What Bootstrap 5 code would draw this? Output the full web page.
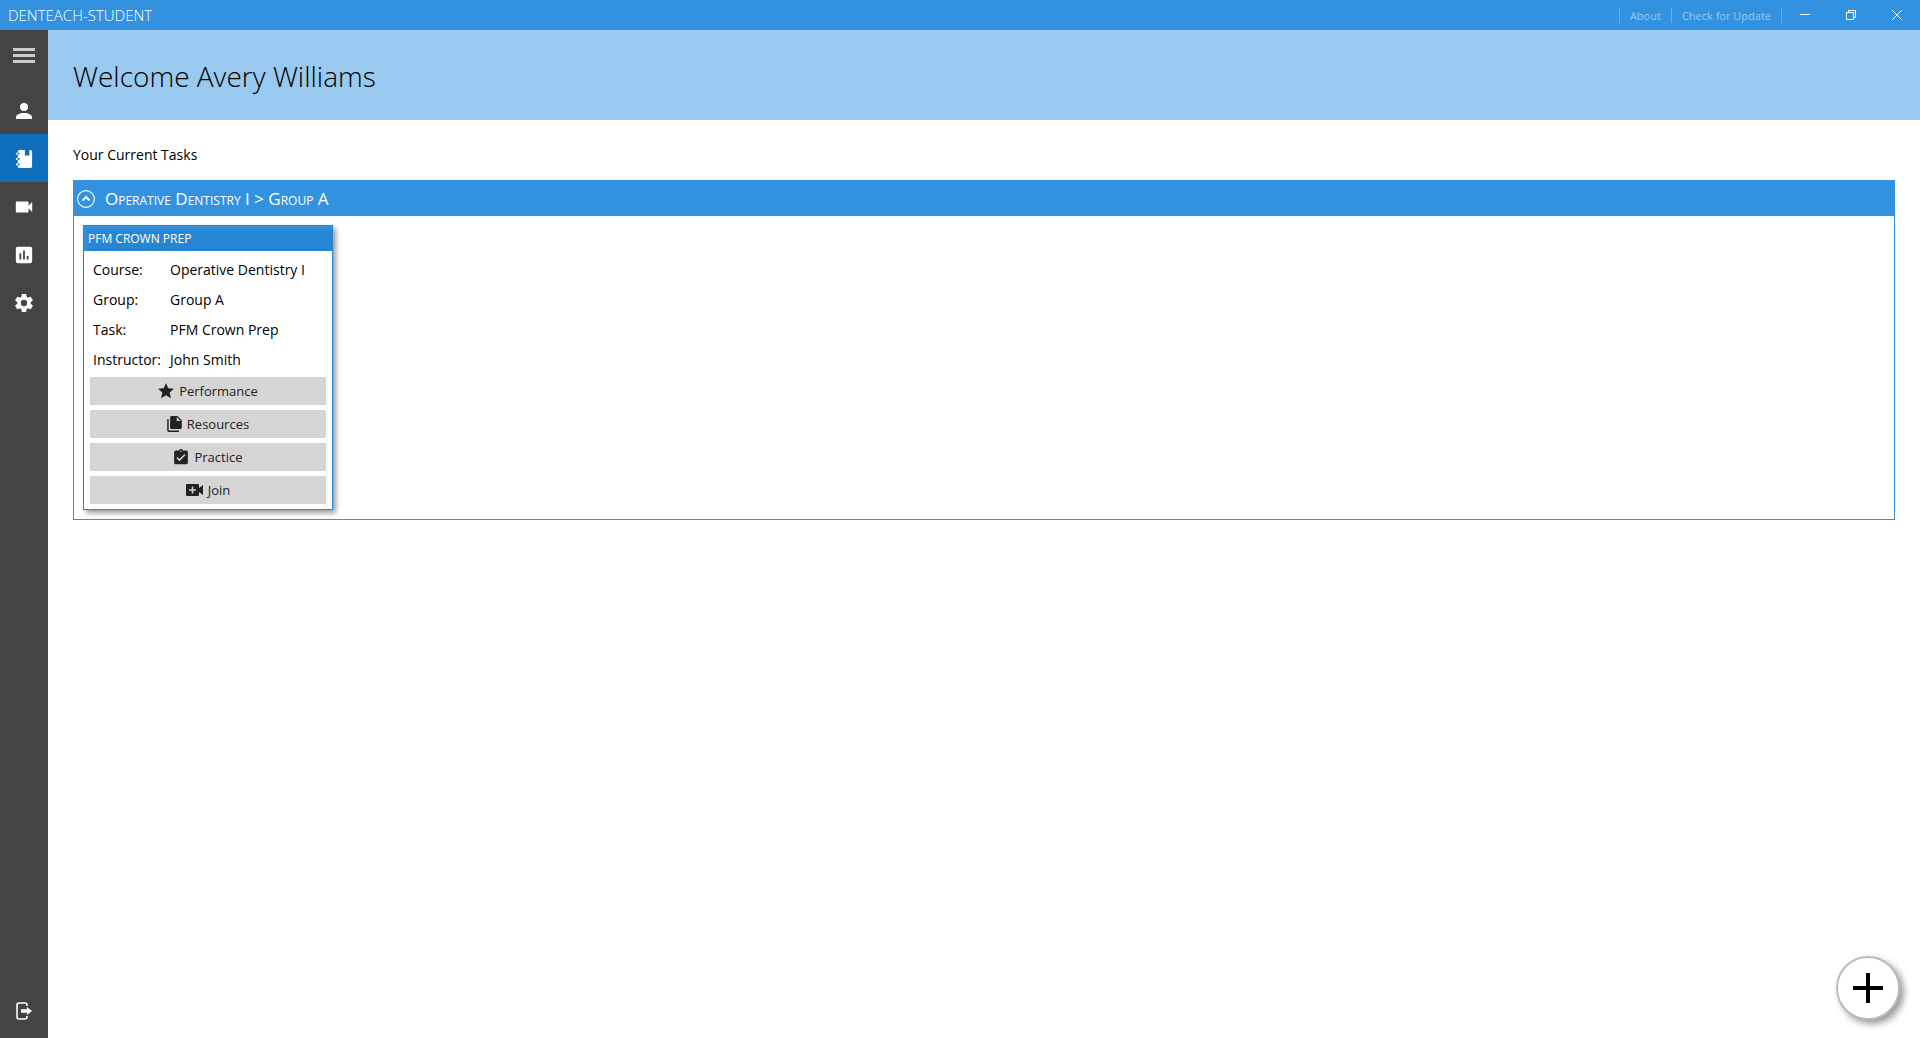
<!DOCTYPE html>
<html lang="en">
<head>
<meta charset="utf-8">
<meta name="viewport" content="width=device-width, initial-scale=1">
<title>DENTEACH-STUDENT</title>
<link href="https://cdn.jsdelivr.net/npm/bootstrap@5.3.0/dist/css/bootstrap.min.css" rel="stylesheet">
<style>
  body { font-family: "Open Sans", "Noto Sans", sans-serif; font-size: 14px; line-height: 20px; color: #000; }
  svg { display: block; fill: currentColor; flex: none; }
  .titlebar { height: 30px; background: #3392df; }
  .app-name { font-size: 15px; font-weight: 300; }
  .top-link { font-size: 11px; line-height: 15px; color: #94c8f2; border-left: 1px solid #66aee8; padding: 0 10px; }
  .top-link:last-of-type { border-right: 1px solid #66aee8; }
  .win-btn { width: 46px; height: 30px; }
  .side-rail { width: 48px; background: #444; }
  .rail-btn, .rail-btn.active { width: 48px; height: 48px; color: #fff; }
  .rail-btn.active { background: #0f6ebb; }
  .rail-btn svg { margin-top: 2px; }
  .menu-btn { margin-bottom: 8px; color: #ccc; }
  .welcome { height: 90px; background: #99c9ef; padding: 2px 25px 0; }
  .welcome h1 { font-size: 28px; line-height: 40px; font-weight: 300; }
  .content { padding: 25px; }
  .section-title { font-size: 14px; line-height: 20px; margin-bottom: 15px; }
  .task-group { border: 1px solid #3392df; }
  .group-head { height: 35px; background: #3392df; padding-left: 3px; gap: 10px; }
  .group-name { font-size: 17px; font-variant: small-caps; }
  .group-body { padding: 9px; }
  .task-card { width: 250px; border: 1px solid #2786d3; background: #fff; box-shadow: 3px 3px 5px rgba(0,0,0,.4); }
  .task-head { font-size: 12px; line-height: 25px; background: #2786d3; box-shadow: inset 3px 3px 5px #3392df; padding-left: 4px; }
  .task-info { padding: 4px 9px 2px; font-size: 14px; line-height: 30px; grid-template-columns: 77px 1fr; }
  .task-actions { padding: 0 6px 5px; gap: 5px; }
  .act { height: 28px; background: #d5d5d5; color: #222; font-size: 13px; line-height: 20px; gap: 5px; }
  .fab { width: 64px; height: 64px; right: 20px; bottom: 18px; background: #fff; border: 2px solid #bbb; color: #000; box-shadow: 4px 4px 7px rgba(0,0,0,.4); }
</style>
<script src="https://cdn.jsdelivr.net/npm/bootstrap@5.3.0/dist/js/bootstrap.bundle.min.js"></script>
</head>
<body class="d-flex flex-column vh-100">
<header class="titlebar d-flex align-items-center text-white ps-2">
  <span class="app-name me-auto">DENTEACH-STUDENT</span>
  <a class="top-link text-decoration-none" href="#">About</a>
  <a class="top-link text-decoration-none" href="#">Check for Update</a>
  <button type="button" class="win-btn btn rounded-0 border-0 p-0 text-white d-flex align-items-center justify-content-center" aria-label="Minimize"><svg width="10" height="10"><path d="M0 4h10v1H0z"/></svg></button>
  <button type="button" class="win-btn btn rounded-0 border-0 p-0 text-white d-flex align-items-center justify-content-center" aria-label="Restore"><svg width="10" height="10"><path d="M.5 2.500h7v7h-7zM2.500 2.500v-2h7v7h-2" fill="none" stroke="currentColor"/></svg></button>
  <button type="button" class="win-btn btn rounded-0 border-0 p-0 text-white d-flex align-items-center justify-content-center" aria-label="Close"><svg width="10" height="10"><path d="M0 0l10 10M10 0L0 10" stroke="currentColor" stroke-width=".9"/></svg></button>
</header>
<div class="d-flex flex-grow-1">
  <nav class="side-rail d-flex flex-column pb-1" aria-label="Main">
    <button type="button" class="rail-btn menu-btn btn rounded-0 border-0 p-0 d-flex align-items-center justify-content-center" aria-label="Menu"><svg width="22" height="15"><path d="M0 0v3h22V0zM0 6v3h22V6zM0 12v3h22v-3z"/></svg></button>
    <button type="button" class="rail-btn btn rounded-0 border-0 p-0 d-flex align-items-center justify-content-center" aria-label="Profile"><svg width="24" height="24" viewBox="0 0 24 24"><path d="M12 4a4 4 0 0 1 4 4 4 4 0 0 1-4 4 4 4 0 0 1-4-4 4 4 0 0 1 4-4m0 10c4.420 0 8 1.790 8 4v2H4v-2c0-2.210 3.580-4 8-4z"/></svg></button>
    <button type="button" class="rail-btn active btn rounded-0 border-0 p-0 d-flex align-items-center justify-content-center" aria-label="Tasks"><svg width="18" height="18" viewBox="2 2 20 20"><path d="M3 7V5h2V4a2 2 0 0 1 2-2h6v7l2.500-1.500L18 9V2h1c1.050 0 2 .95 2 2v16c0 1.050-.95 2-2 2H7c-1.050 0-2-.95-2-2v-1H3v-2h2v-4H3v-2h2V7H3m2-2v2h2V5H5m0 14h2v-2H5v2m0-6h2v-2H5v2z"/></svg></button>
    <button type="button" class="rail-btn btn rounded-0 border-0 p-0 d-flex align-items-center justify-content-center" aria-label="Video"><svg width="20" height="20" viewBox="1 1 22 22"><path d="M17 10.500V7a1 1 0 0 0-1-1H4a1 1 0 0 0-1 1v10a1 1 0 0 0 1 1h12a1 1 0 0 0 1-1v-3.500l4 4v-11z"/></svg></button>
    <button type="button" class="rail-btn btn rounded-0 border-0 p-0 d-flex align-items-center justify-content-center" aria-label="Statistics"><svg width="20" height="20" viewBox="1 1 22 22"><path fill-rule="evenodd" d="M5 3h14a2 2 0 0 1 2 2v14a2 2 0 0 1-2 2H5a2 2 0 0 1-2-2V5a2 2 0 0 1 2-2zM7 10v7h2v-7zM11 7v10h2V7zM15 13v4h2v-4z"/></svg></button>
    <button type="button" class="rail-btn btn rounded-0 border-0 p-0 d-flex align-items-center justify-content-center" aria-label="Settings"><svg width="18" height="18" viewBox="2 2 20 20"><path d="M12 15.500A3.500 3.500 0 0 1 8.500 12 3.500 3.500 0 0 1 12 8.500a3.500 3.500 0 0 1 3.500 3.500 3.500 3.500 0 0 1-3.500 3.500m7.430-2.530c.04-.32.070-.64.070-.97s-.03-.66-.07-1l2.110-1.630c.19-.15.24-.42.120-.64l-2-3.460c-.12-.22-.39-.3-.61-.22l-2.490 1c-.52-.39-1.060-.73-1.690-.98l-.37-2.650A.506.506 0 0 0 14 2h-4c-.25 0-.46.180-.5.420l-.37 2.650c-.63.250-1.170.590-1.690.980l-2.490-1c-.22-.08-.49 0-.61.220l-2 3.460c-.13.220-.07.490.120.640L4.570 11c-.04.340-.07.670-.07 1s.03.650.070.970l-2.110 1.660c-.19.150-.25.420-.12.640l2 3.460c.12.220.39.300.61.220l2.490-1.010c.52.400 1.060.740 1.690.990l.37 2.650c.04.240.25.420.5.420h4c.25 0 .46-.18.500-.42l.37-2.650c.63-.26 1.170-.59 1.690-.99l2.490 1.010c.22.080.49 0 .61-.22l2-3.460c.12-.22.070-.49-.12-.64z"/></svg></button>
    <button type="button" class="rail-btn mt-auto btn rounded-0 border-0 p-0 d-flex align-items-center justify-content-center" aria-label="Log out"><svg width="16" height="18"><path d="M11 4V3q0-2-2-2H3Q1 1 1 3v12q0 2 2 2h6q2 0 2-2v-1" fill="none" stroke="currentColor" stroke-width="1.600"/><path d="M5 7.300h6V5l5 4-5 4v-2.300H5z"/></svg></button>
  </nav>
  <main class="flex-grow-1">
    <div class="welcome d-flex align-items-center"><h1 class="mb-0">Welcome Avery Williams</h1></div>
    <div class="content">
      <h2 class="section-title fw-normal">Your Current Tasks</h2>
      <section class="task-group">
        <div class="group-head d-flex align-items-center text-white">
          <button type="button" class="btn border-0 p-0 text-white" aria-label="Collapse group"><svg width="18" height="18"><circle cx="9" cy="9" r="8.400" fill="none" stroke="currentColor" stroke-width="1.100"/><path d="M5.500 10.500L9 7l3.500 3.500" fill="none" stroke="currentColor" stroke-width="2"/></svg></button>
          <span class="group-name">Operative Dentistry I &gt; Group A</span>
        </div>
        <div class="group-body d-flex">
          <article class="task-card">
            <div class="task-head text-white">PFM CROWN PREP</div>
            <dl class="task-info d-grid mb-0">
              <dt class="fw-normal">Course:</dt><dd class="mb-0">Operative Dentistry I</dd>
              <dt class="fw-normal">Group:</dt><dd class="mb-0">Group A</dd>
              <dt class="fw-normal">Task:</dt><dd class="mb-0">PFM Crown Prep</dd>
              <dt class="fw-normal">Instructor:</dt><dd class="mb-0">John Smith</dd>
            </dl>
            <div class="task-actions d-flex flex-column">
              <button type="button" class="act btn rounded-0 border-0 p-0 d-flex align-items-center justify-content-center"><svg width="16" height="16" viewBox="2 2 20 20"><path d="M12 17.270L18.180 21l-1.640-7.030L22 9.240l-7.190-.61L12 2 9.190 8.630 2 9.240l5.450 4.730L5.820 21z"/></svg>Performance</button>
              <button type="button" class="act btn rounded-0 border-0 p-0 d-flex align-items-center justify-content-center"><svg width="15" height="16" viewBox="1 2 20 22"><path d="M14 9h5.500L14 3.500V9M7 2h8l6 6v10a2 2 0 0 1-2 2H7a2 2 0 0 1-2-2V4a2 2 0 0 1 2-2M3 6v16h14v2H3a2 2 0 0 1-2-2V6h2z"/></svg>Resources</button>
              <button type="button" class="act btn rounded-0 border-0 p-0 d-flex align-items-center justify-content-center"><svg width="16" height="16" viewBox="2 1 20 21"><path fill-rule="evenodd" d="M10 17l-4-4 1.410-1.410L10 14.170l6.590-6.580L18 9zM12 3a1 1 0 0 1 1 1 1 1 0 0 1-1 1 1 1 0 0 1-1-1 1 1 0 0 1 1-1m7 0h-4.180C14.400 1.840 13.300 1 12 1s-2.400.84-2.820 2H5a2 2 0 0 0-2 2v14a2 2 0 0 0 2 2h14a2 2 0 0 0 2-2V5a2 2 0 0 0-2-2z"/></svg>Practice</button>
              <button type="button" class="act btn rounded-0 border-0 p-0 d-flex align-items-center justify-content-center"><svg width="17" height="12"><path fill-rule="evenodd" d="M1 0h11q1 0 1 1v3l4-3v10l-4-3v3q0 1-1 1H1q-1 0-1-1V1q0-1 1-1zM5.700 2.500v2.700H3v1.600h2.700v2.700h1.600V6.800H10V5.200H7.300V2.500z"/></svg>Join</button>
            </div>
          </article>
        </div>
      </section>
    </div>
  </main>
</div>
<button type="button" class="fab btn rounded-circle position-fixed p-0 d-flex align-items-center justify-content-center" aria-label="Add task"><svg width="30" height="30"><path d="M13 0h4v13h13v4H17v13h-4V17H0v-4h13z"/></svg></button>
</body>
</html>
